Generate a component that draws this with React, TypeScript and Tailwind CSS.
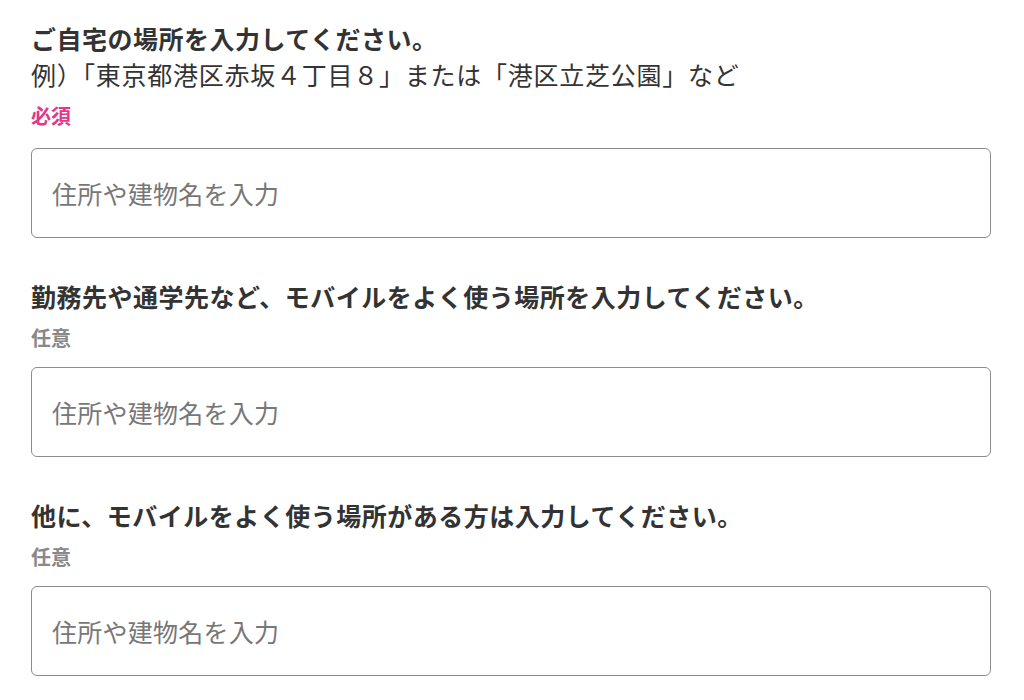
const FONT = "font-['Noto_Sans_CJK_JP','Noto_Sans',sans-serif]"

interface FieldProps {
  title: string
  note?: string
  required?: boolean
  first?: boolean
}

function LocationField({ title, note, required = false, first = false }: FieldProps) {
  return (
    <div className={first ? 'pt-[21px]' : 'pt-[41px]'}>
      <h2 className="text-[25px] font-bold leading-[34px] tracking-[0.02em] text-[#333333]">{title}</h2>
      {note && (
        <p className="mt-[2px] text-[25px] leading-[34px] tracking-[0.03em] text-[#333333]">{note}</p>
      )}
      {required ? (
        <div className="mt-[11px] text-[20px] font-bold leading-[28px] text-[#e0388b]">必須</div>
      ) : (
        <div className="mt-[11px] text-[20px] font-bold leading-[28px] text-[#888888]">任意</div>
      )}
      <input
        type="text"
        placeholder="住所や建物名を入力"
        className={`${required ? 'mt-[18px]' : 'mt-[15px]'} block h-[90px] w-[960px] rounded-[6px] border border-[#8c8c8c] bg-white px-[20px] text-[25px] tracking-[0.01em] text-[#333333] placeholder:text-[#777777] focus:outline-none`}
      />
    </div>
  )
}

export default function App() {
  return (
    <div className={`min-h-[700px] bg-white pl-[31px] ${FONT}`}>
      <LocationField
        first
        required
        title="ご自宅の場所を入力してください。"
        note="例）「東京都港区赤坂４丁目８」または「港区立芝公園」など"
      />
      <LocationField title="勤務先や通学先など、モバイルをよく使う場所を入力してください。" />
      <LocationField title="他に、モバイルをよく使う場所がある方は入力してください。" />
    </div>
  )
}
